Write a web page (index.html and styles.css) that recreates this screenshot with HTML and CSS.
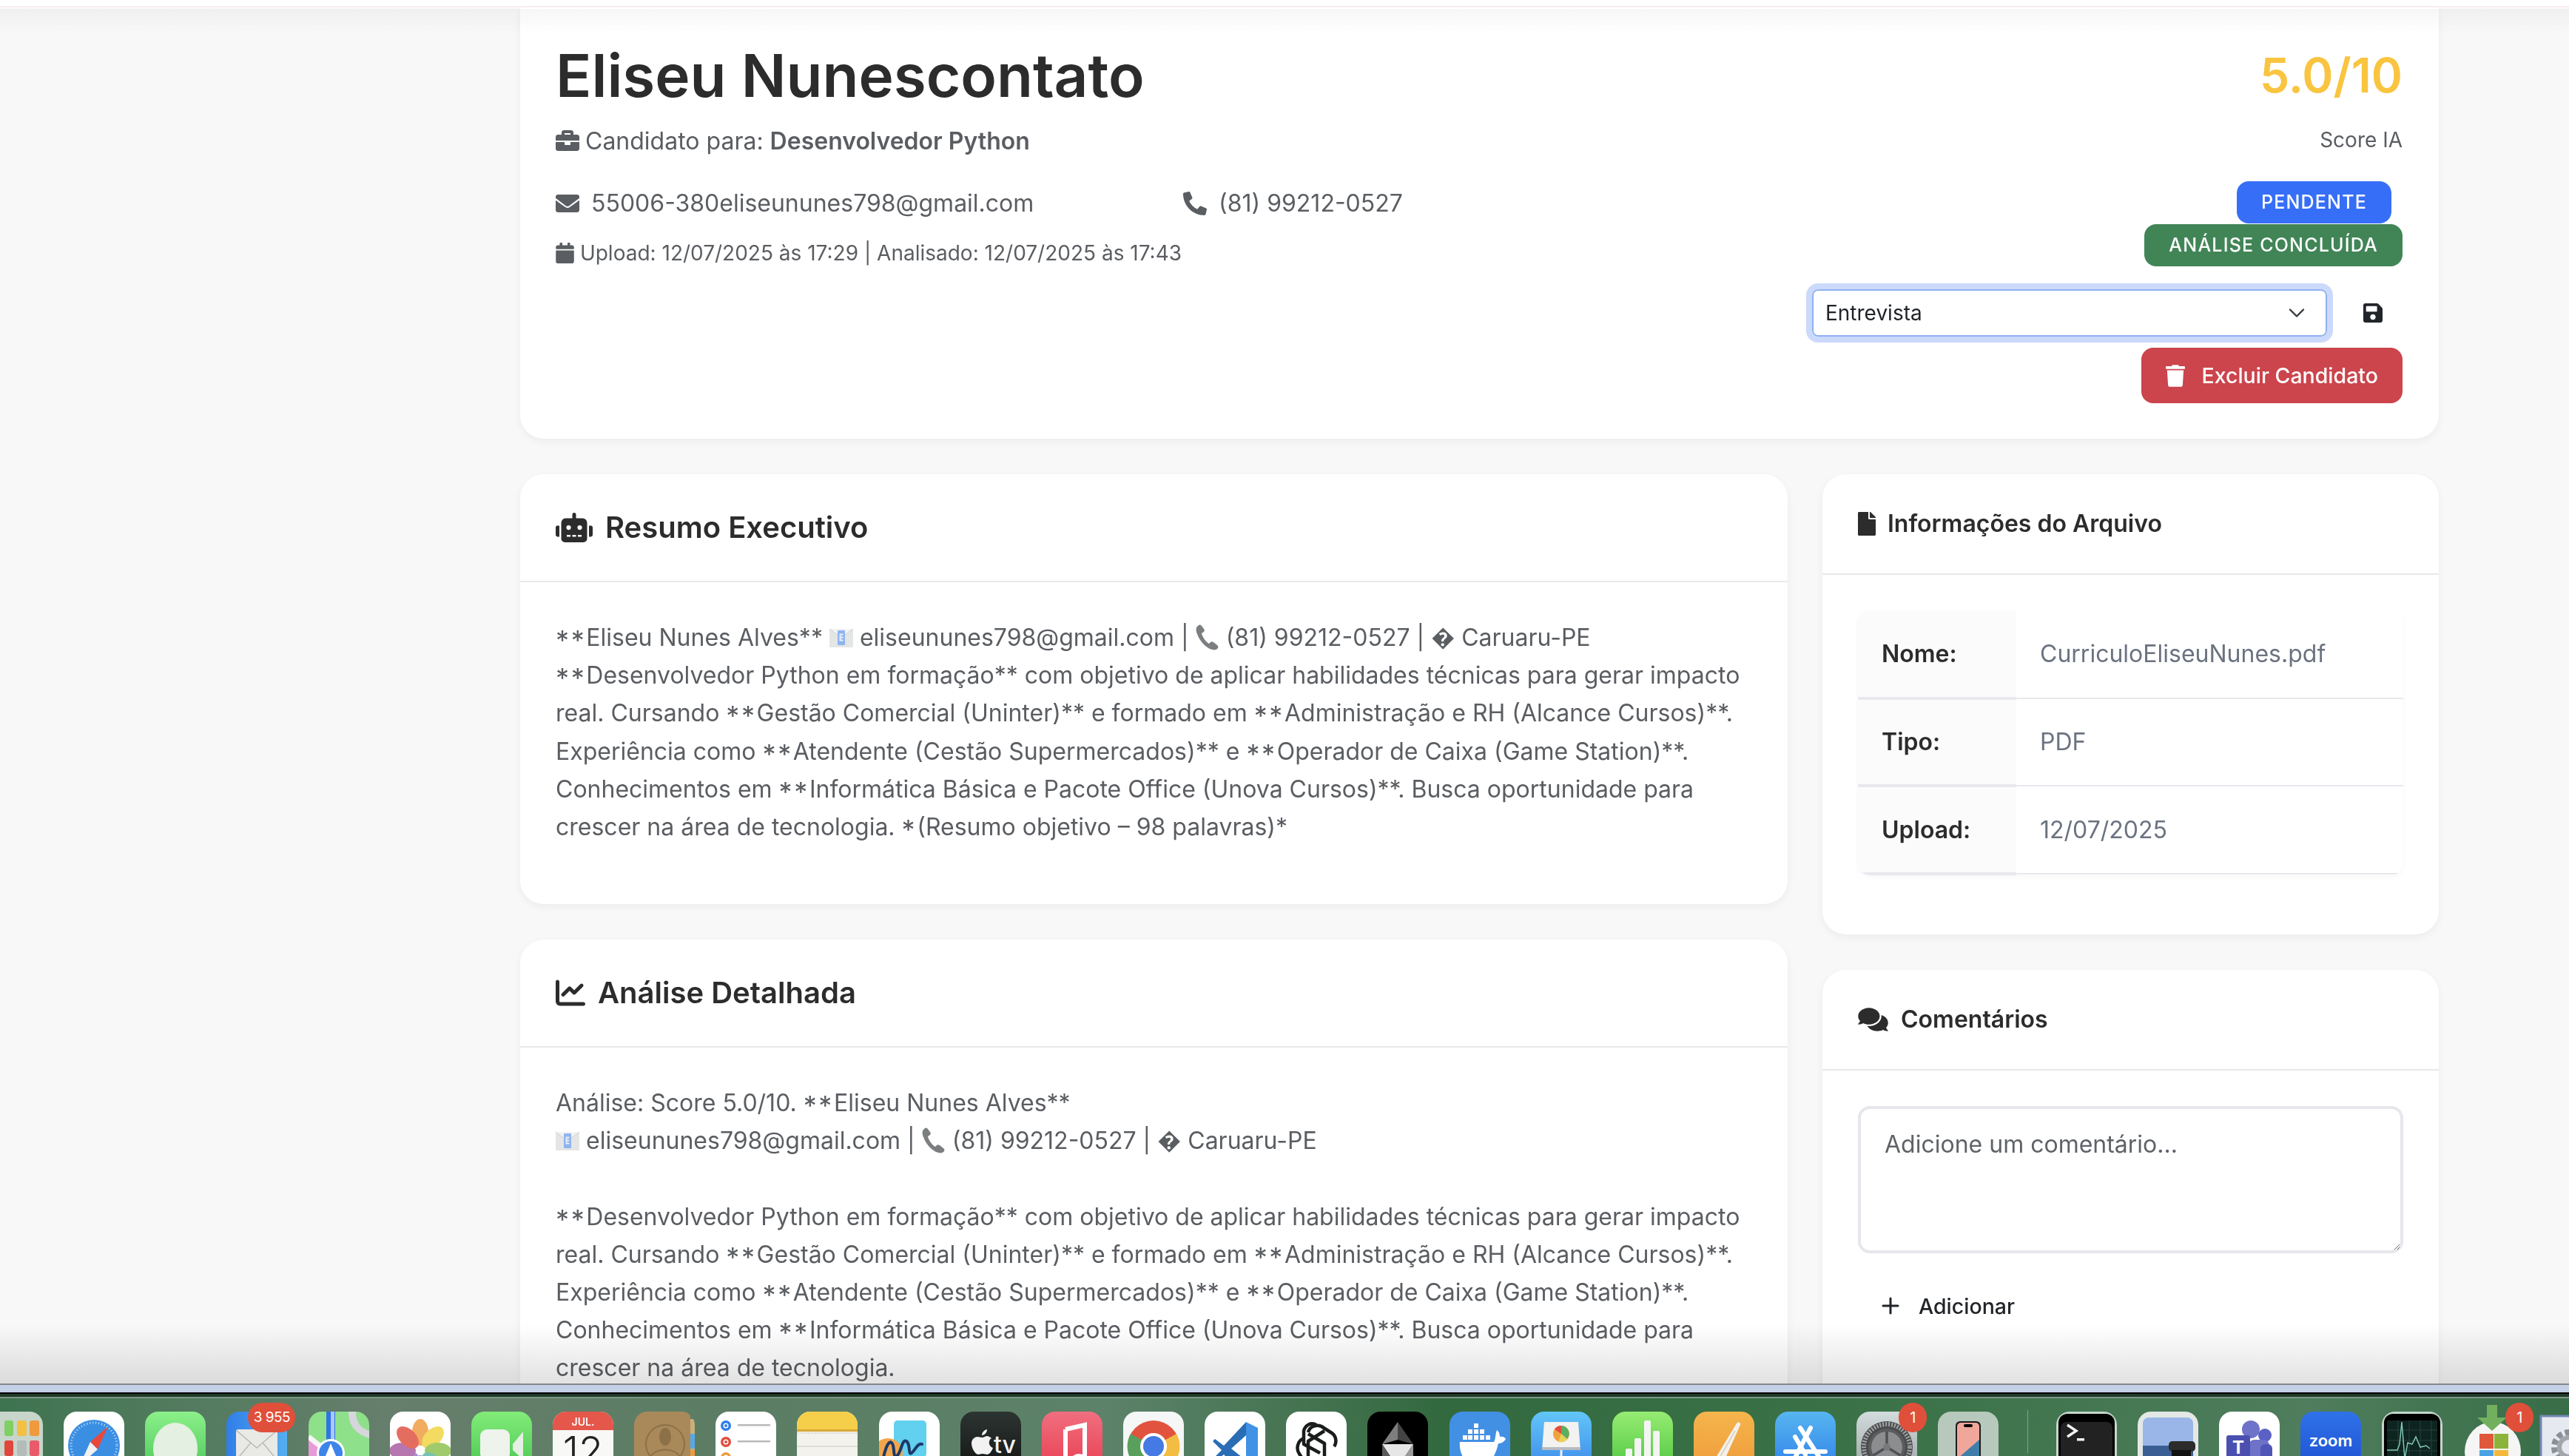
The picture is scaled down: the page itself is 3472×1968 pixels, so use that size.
FILE: index.html
```html
<!DOCTYPE html>
<html lang="pt-BR">
<head>
<meta charset="utf-8">
<title>Eliseu Nunescontato</title>
<link rel="stylesheet" href="styles.css">
</head>
<body>
<svg class="defs" width="0" height="0" aria-hidden="true">
  <symbol id="mail-emoji" viewBox="0 0 32 32"><rect x="0" y="4" width="32" height="25" fill="#e4e6e6"/><path d="M0 4l16 12L32 4" fill="#f2f3f3" stroke="#cfd2d2"/><rect x="11" y="6" width="10" height="20" rx="1" fill="#8fb4ee"/><path d="M13.5 10.5h5v2h-3v2h3v2h-3v2h3v2h-5z" fill="#e8eefb"/></symbol>
  <symbol id="phone-emoji" viewBox="0 0 32 36"><path d="M3 2c-3 2-3 6-1 11 3 8 9 16 17 20 5 2 9 2 11-1 1-2 0-3-1-4l-5-4c-2-1-3-1-4 0l-2 2c-4-2-9-9-10-14l3-2c1-1 1-3 0-4L8 2C6 0 5 0 3 2z" fill="#7c7f80"/></symbol>
</svg>

<div class="topbar"></div>

<main class="page">
  <section class="card hero">
    <div class="hero-left">
      <h1>Eliseu Nunescontato</h1>
      <p class="role"><svg class="ico ico-role" viewBox="0 0 512 512"><path d="M320 336c0 8.84-7.16 16-16 16h-96c-8.84 0-16-7.16-16-16v-48H0v144c0 25.6 22.4 48 48 48h416c25.6 0 48-22.4 48-48V288H320v48zm144-208h-80V80c0-25.6-22.4-48-48-48H176c-25.6 0-48 22.4-48 48v48H48c-25.6 0-48 22.4-48 48v80h512v-80c0-25.6-22.4-48-48-48zm-144 0H192V96h128v32z"/></svg> Candidato para: <strong>Desenvolvedor Python</strong></p>
      <div class="contacts">
        <span class="contact"><svg class="ico ico-contact" viewBox="0 0 512 512"><path d="M502.3 190.8c3.9-3.1 9.7-.2 9.7 4.7V400c0 26.5-21.5 48-48 48H48c-26.5 0-48-21.5-48-48V195.6c0-5 5.7-7.8 9.7-4.7 22.4 17.4 52.1 39.5 154.1 113.6 21.1 15.4 56.7 47.8 92.2 47.6 35.7.3 72-32.8 92.3-47.6 102-74.1 131.6-96.3 154-113.7zM256 320c23.2.4 56.6-29.2 73.4-41.4 132.7-96.3 142.8-104.7 173.4-128.7 5.8-4.5 9.2-11.5 9.2-18.9v-19c0-26.5-21.5-48-48-48H48C21.5 64 0 85.5 0 112v19c0 7.4 3.4 14.3 9.2 18.9 30.6 23.9 40.7 32.4 173.4 128.7 16.8 12.2 50.2 41.8 73.4 41.4z"/></svg>55006-380eliseununes798@gmail.com</span>
        <span class="contact"><svg class="ico ico-contact" viewBox="0 0 512 512"><path d="M497.39 361.8l-112-48a24 24 0 0 0-28 6.9l-49.6 60.6A370.66 370.66 0 0 1 130.6 204.11l60.6-49.6a23.94 23.94 0 0 0 6.9-28l-48-112A24.16 24.16 0 0 0 122.6.61l-104 24A24 24 0 0 0 0 48c0 256.5 207.9 464 464 464a24 24 0 0 0 23.4-18.6l24-104a24.29 24.29 0 0 0-14.01-27.6z"/></svg>(81) 99212-0527</span>
      </div>
      <p class="meta"><svg class="ico ico-meta" viewBox="0 0 448 512"><path d="M12 192h424c6.6 0 12 5.4 12 12v260c0 26.5-21.5 48-48 48H48c-26.5 0-48-21.5-48-48V204c0-6.6 5.4-12 12-12zm436-44v-36c0-26.5-21.5-48-48-48h-48V12c0-6.6-5.4-12-12-12h-40c-6.6 0-12 5.4-12 12v52H160V12c0-6.6-5.4-12-12-12h-40c-6.6 0-12 5.4-12 12v52H48C21.5 64 0 85.5 0 112v36c0 6.6 5.4 12 12 12h424c6.6 0 12-5.4 12-12z"/></svg> Upload: 12/07/2025 às 17:29 | Analisado: 12/07/2025 às 17:43</p>
    </div>
    <div class="hero-right">
      <div class="score">5.0/10</div>
      <div class="score-label">Score IA</div>
      <span class="badge badge-blue">PENDENTE</span>
      <span class="badge badge-green">ANÁLISE CONCLUÍDA</span>
      <div class="status-row">
        <div class="select-wrap">
          <select class="status-select"><option>Entrevista</option></select>
          <svg class="chevron" viewBox="0 0 16 16"><path d="M2 5l6 6 6-6" fill="none" stroke="#343a40" stroke-width="1.6" stroke-linecap="round" stroke-linejoin="round"/></svg>
        </div>
        <svg class="ico ico-save" viewBox="0 0 448 512"><path d="M433.941 129.941l-83.882-83.882A48 48 0 0 0 316.118 32H48C21.49 32 0 53.49 0 80v352c0 26.51 21.49 48 48 48h352c26.51 0 48-21.49 48-48V163.882a48 48 0 0 0-14.059-33.941zM224 416c-35.346 0-64-28.654-64-64 0-35.346 28.654-64 64-64s64 28.654 64 64c0 35.346-28.654 64-64 64zm96-304.52V212c0 6.627-5.373 12-12 12H76c-6.627 0-12-5.373-12-12V108c0-6.627 5.373-12 12-12h228.52c3.183 0 6.235 1.264 8.485 3.515l3.48 3.48A11.996 11.996 0 0 1 320 111.48z"/></svg>
      </div>
      <button class="btn-danger"><svg class="ico ico-trash" viewBox="0 0 448 512"><path d="M432 32H312l-9.4-18.7A24 24 0 0 0 281.1 0H166.8a23.72 23.72 0 0 0-21.4 13.3L136 32H16A16 16 0 0 0 0 48v32a16 16 0 0 0 16 16h416a16 16 0 0 0 16-16V48a16 16 0 0 0-16-16zM53.2 467a48 48 0 0 0 47.9 45h245.8a48 48 0 0 0 47.9-45L416 128H32z"/></svg>Excluir Candidato</button>
    </div>
  </section>

  <div class="columns">
    <div class="col">
      <section class="card">
        <header class="card-head head-lg"><svg class="ico ico-robot" viewBox="0 0 640 512"><path d="M32,224H64V416H32A31.96166,31.96166,0,0,1,0,384V256A31.96166,31.96166,0,0,1,32,224Zm512-48V448a64.06328,64.06328,0,0,1-64,64H160a64.06328,64.06328,0,0,1-64-64V176a79.974,79.974,0,0,1,80-80H288V32a32,32,0,0,1,64,0V96H464A79.974,79.974,0,0,1,544,176ZM264,256a40,40,0,1,0-40,40A39.997,39.997,0,0,0,264,256Zm-8,128H192v32h64Zm96,0H288v32h64ZM456,256a40,40,0,1,0-40,40A39.997,39.997,0,0,0,456,256Zm-8,128H384v32h64ZM640,256V384a31.96166,31.96166,0,0,1-32,32H576V224h32A31.96166,31.96166,0,0,1,640,256Z"/></svg><h2>Resumo Executivo</h2></header>
        <div class="card-body">
          <div class="prose">
            <span class="line"><span class="ast">**</span>Eliseu Nunes Alves** <svg class="emoji"><use href="#mail-emoji"/></svg> eliseununes798@gmail.com | <svg class="emoji emoji-phone"><use href="#phone-emoji"/></svg> (81) 99212-0527 | � Caruaru-PE</span>
            <span class="line"><span class="ast">**</span>Desenvolvedor Python em formação** com objetivo de aplicar habilidades técnicas para gerar impacto</span>
            <span class="line">real. Cursando <span class="ast">**</span>Gestão Comercial (Uninter)** e formado em <span class="ast">**</span>Administração e RH (Alcance Cursos)**.</span>
            <span class="line">Experiência como <span class="ast">**</span>Atendente (Cestão Supermercados)** e <span class="ast">**</span>Operador de Caixa (Game Station)**.</span>
            <span class="line">Conhecimentos em <span class="ast">**</span>Informática Básica e Pacote Office (Unova Cursos)**. Busca oportunidade para</span>
            <span class="line">crescer na área de tecnologia. <span class="ast">*</span>(Resumo objetivo – 98 palavras)*</span>
          </div>
        </div>
      </section>
      <section class="card">
        <header class="card-head head-lg"><svg class="ico ico-chart" viewBox="0 0 512 512"><path d="M64 64c0-17.7-14.3-32-32-32S0 46.3 0 64V400c0 44.2 35.8 80 80 80H480c17.7 0 32-14.3 32-32s-14.3-32-32-32H80c-8.8 0-16-7.2-16-16V64zm406.6 86.6c12.5-12.5 12.5-32.8 0-45.3s-32.8-12.5-45.3 0L320 210.7l-57.4-57.4c-12.5-12.5-32.8-12.5-45.3 0l-112 112c-12.5 12.5-12.5 32.8 0 45.3s32.8 12.5 45.3 0L240 221.3l57.4 57.4c12.5 12.5 32.8 12.5 45.3 0l128-128z"/></svg><h2>Análise Detalhada</h2></header>
        <div class="card-body">
          <div class="prose">
            <span class="line">Análise: Score 5.0/10. <span class="ast">**</span>Eliseu Nunes Alves**</span>
            <span class="line line-gap"><svg class="emoji"><use href="#mail-emoji"/></svg> eliseununes798@gmail.com | <svg class="emoji emoji-phone"><use href="#phone-emoji"/></svg> (81) 99212-0527 | � Caruaru-PE</span>
            <span class="line"><span class="ast">**</span>Desenvolvedor Python em formação** com objetivo de aplicar habilidades técnicas para gerar impacto</span>
            <span class="line">real. Cursando <span class="ast">**</span>Gestão Comercial (Uninter)** e formado em <span class="ast">**</span>Administração e RH (Alcance Cursos)**.</span>
            <span class="line">Experiência como <span class="ast">**</span>Atendente (Cestão Supermercados)** e <span class="ast">**</span>Operador de Caixa (Game Station)**.</span>
            <span class="line">Conhecimentos em <span class="ast">**</span>Informática Básica e Pacote Office (Unova Cursos)**. Busca oportunidade para</span>
            <span class="line">crescer na área de tecnologia.</span>
          </div>
        </div>
      </section>
    </div>
    <aside class="col">
      <section class="card">
        <header class="card-head head-sm"><svg class="ico ico-file" viewBox="0 0 384 512"><path d="M224 136V0H24C10.7 0 0 10.7 0 24v464c0 13.3 10.7 24 24 24h336c13.3 0 24-10.7 24-24V160H248c-13.2 0-24-10.8-24-24zm160-14.1v6.1H256V0h6.1c6.4 0 12.5 2.5 17 7l97.9 98c4.5 4.5 7 10.6 7 16.9z"/></svg><h3>Informações do Arquivo</h3></header>
        <div class="card-body">
          <table class="info">
            <tr><th>Nome:</th><td>CurriculoEliseuNunes.pdf</td></tr>
            <tr><th>Tipo:</th><td>PDF</td></tr>
            <tr><th>Upload:</th><td>12/07/2025</td></tr>
          </table>
        </div>
      </section>
      <section class="card">
        <header class="card-head head-sm"><svg class="ico ico-comments" viewBox="0 0 576 512"><path d="M416 192c0-88.4-93.1-160-208-160S0 103.6 0 192c0 34.3 14.1 65.9 38 92-13.4 30.2-35.5 54.2-35.8 54.5-2.2 2.3-2.8 5.7-1.5 8.7S4.8 352 8 352c36.6 0 66.9-12.3 88.7-25 32.2 15.7 70.3 25 111.3 25 114.9 0 208-71.6 208-160zm122 220c23.9-26 38-57.7 38-92 0-66.9-53.5-124.2-129.3-148.1.9 6.6 1.3 13.3 1.3 20.1 0 105.9-107.7 192-240 192-10.8 0-21.3-.8-31.7-1.9C207.8 439.6 281.8 480 368 480c41 0 79.1-9.2 111.3-25 21.8 12.7 52.1 25 88.7 25 3.2 0 6.1-1.9 7.3-4.8 1.3-2.9.7-6.3-1.5-8.7-.3-.3-22.4-24.2-35.8-54.5z"/></svg><h3>Comentários</h3></header>
        <div class="card-body card-body-tall">
          <textarea class="comment" placeholder="Adicione um comentário..."></textarea>
          <button class="btn-plain"><svg class="ico-plus" viewBox="0 0 24 24"><path d="M12 2v20M2 12h20" fill="none" stroke="#212529" stroke-width="3" stroke-linecap="round"/></svg>Adicionar</button>
        </div>
      </section>
    </aside>
  </div>
</main>

<div class="top-fade"></div>

<div class="dock-wrap">
  <div class="fade"></div>
  <div class="strip"></div>
  <div class="shelf"></div>
  <nav class="dock">
    <!-- Launchpad -->
    <div class="app"><svg viewBox="0 0 82 82"><rect width="82" height="82" fill="#c7d5ca"/><g><rect x="30" y="12" width="12" height="21" rx="3" fill="#7fcf62"/><rect x="47" y="12" width="13" height="21" rx="3" fill="#f4c042"/><rect x="64" y="12" width="13" height="21" rx="3" fill="#ef9a3c"/><rect x="30" y="39" width="12" height="21" rx="3" fill="#e0473c"/><rect x="47" y="39" width="13" height="21" rx="3" fill="#b4bcb9"/><rect x="64" y="39" width="13" height="21" rx="3" fill="#ea5a6a"/><rect x="30" y="66" width="12" height="16" rx="3" fill="#52c4b0"/><rect x="47" y="66" width="13" height="16" rx="3" fill="#59b8ef"/><rect x="64" y="66" width="13" height="16" rx="3" fill="#8a6ae0"/></g></svg></div>
    <!-- Safari -->
    <div class="app"><svg viewBox="0 0 82 82"><rect width="82" height="82" fill="#fff"/><circle cx="41" cy="46" r="35" fill="#3b8fe3"/><circle cx="41" cy="46" r="31" fill="none" stroke="#cfe3f7" stroke-width="3" stroke-dasharray="1 3"/><path d="M60 20L46 51 36 41z" fill="#e8483c"/><path d="M22 72l14-31 10 10z" fill="#f2f2f2"/></svg></div>
    <!-- Messages -->
    <div class="app"><svg viewBox="0 0 82 82"><defs><linearGradient id="gMsg" x1="0" y1="0" x2="0" y2="1"><stop offset="0" stop-color="#8cf08a"/><stop offset="1" stop-color="#4cc85a"/></linearGradient></defs><rect width="82" height="82" fill="url(#gMsg)"/><ellipse cx="41" cy="50" rx="30" ry="35" fill="#e4f0e2"/></svg></div>
    <!-- Mail -->
    <div class="app"><svg viewBox="0 0 82 82"><defs><linearGradient id="gMail" x1="0" y1="0" x2="1" y2="0"><stop offset="0" stop-color="#2f7ee8"/><stop offset="1" stop-color="#55aef0"/></linearGradient></defs><rect width="82" height="82" fill="url(#gMail)"/><rect x="13" y="24" width="56" height="42" rx="3" fill="#e9e9e6"/><path d="M13 25l28 24 28-24M13 66l20-24M69 66L49 42" fill="none" stroke="#b9b9b5" stroke-width="1.5"/></svg><span class="badge-dock badge-wide">3 955</span></div>
    <!-- Maps -->
    <div class="app"><svg viewBox="0 0 82 82"><rect width="82" height="82" fill="#8fe08a"/><path d="M0 34L32 64v18H0z" fill="#e79ad8"/><path d="M50 82L82 62v20z" fill="#9fe0a0"/><rect x="24" y="0" width="12" height="44" fill="#2f74e6"/><rect x="30" y="0" width="5" height="44" fill="#fff" opacity=".6"/><path d="M54 0c0 20 10 30 28 36v-10C70 22 64 14 64 0z" fill="#d6d6dc"/><path d="M0 34L70 90" stroke="#f5f5f5" stroke-width="7" fill="none"/><circle cx="30" cy="56" r="19" fill="#fff"/><circle cx="30" cy="56" r="16" fill="#3d84ea"/><path d="M30 43L40 67l-10-5-10 5z" fill="#fff"/></svg></div>
    <!-- Photos -->
    <div class="app"><svg viewBox="0 0 82 82"><rect width="82" height="82" fill="#fff"/><g opacity=".82"><ellipse cx="41" cy="28" rx="11" ry="18" fill="#ef9a3c"/><ellipse cx="58" cy="35" rx="11" ry="18" fill="#f0d33e" transform="rotate(45 58 35)"/><ellipse cx="65" cy="53" rx="11" ry="18" fill="#8cc04c" transform="rotate(90 65 53)"/><ellipse cx="58" cy="70" rx="11" ry="18" fill="#5ab5a2" transform="rotate(135 58 70)"/><ellipse cx="41" cy="77" rx="11" ry="18" fill="#6f8fd8"/><ellipse cx="24" cy="70" rx="11" ry="18" fill="#9b74c8" transform="rotate(45 24 70)"/><ellipse cx="17" cy="53" rx="11" ry="18" fill="#a65aa0" transform="rotate(90 17 53)"/><ellipse cx="24" cy="35" rx="11" ry="18" fill="#e04d3e" transform="rotate(135 24 35)"/></g></svg></div>
    <!-- FaceTime -->
    <div class="app"><svg viewBox="0 0 82 82"><defs><linearGradient id="gFt" x1="0" y1="0" x2="0" y2="1"><stop offset="0" stop-color="#82ec78"/><stop offset="1" stop-color="#48c552"/></linearGradient></defs><rect width="82" height="82" fill="url(#gFt)"/><rect x="12" y="24" width="40" height="42" rx="9" fill="#eef3ec"/><path d="M56 44l14-17v38L56 52z" fill="#e6efe3"/></svg></div>
    <!-- Calendar -->
    <div class="app"><svg viewBox="0 0 82 82"><rect width="82" height="82" fill="#f8f8f6"/><rect width="82" height="25" fill="#e4574a"/><text x="41" y="19" class="cal-month">JUL.</text><text x="41" y="72" class="cal-day">12</text></svg></div>
    <!-- Contacts -->
    <div class="app"><svg viewBox="0 0 82 82"><rect x="72" y="10" width="10" height="72" rx="3" fill="#c9b07a"/><rect x="74" y="30" width="8" height="20" fill="#58a8e6"/><rect x="74" y="52" width="8" height="20" fill="#ef9a3c"/><rect width="76" height="82" rx="8" fill="#a9895a"/><circle cx="42" cy="44" r="26" fill="none" stroke="#8c7047" stroke-width="2"/><ellipse cx="42" cy="34" rx="8" ry="12" fill="#8c7047"/><path d="M22 62c5-14 35-14 40 0" fill="none" stroke="#8c7047" stroke-width="2"/></svg></div>
    <!-- Reminders -->
    <div class="app"><svg viewBox="0 0 82 82"><rect width="82" height="82" fill="#fff"/><circle cx="14" cy="19" r="7" fill="#2f7ee8"/><circle cx="14" cy="19" r="3.5" fill="#fff"/><circle cx="14" cy="19" r="2" fill="#2f7ee8"/><rect x="30" y="17" width="44" height="2.5" fill="#b8babb"/><circle cx="14" cy="41" r="7" fill="#e04d3e"/><circle cx="14" cy="41" r="3.5" fill="#fff"/><circle cx="14" cy="41" r="2" fill="#e04d3e"/><rect x="30" y="39" width="44" height="2.5" fill="#b8babb"/><circle cx="14" cy="62" r="7" fill="#ef9a3c"/><circle cx="14" cy="62" r="3.5" fill="#fff"/></svg></div>
    <!-- Notes -->
    <div class="app"><svg viewBox="0 0 82 82"><rect width="82" height="82" fill="#f3f2ec"/><rect width="82" height="24" fill="#f6cf4a"/><rect y="24" width="82" height="3" fill="#d9a838"/><path d="M0 29h82" stroke="#c5c5bd" stroke-width="1.5" stroke-dasharray="1 1.5"/><rect y="46" width="82" height="2" fill="#dedcd4"/></svg></div>
    <!-- Freeform -->
    <div class="app"><svg viewBox="0 0 82 82"><rect width="82" height="82" fill="#fff"/><rect x="20" y="12" width="44" height="50" rx="5" fill="#62d0ef"/><circle cx="12" cy="56" r="20" fill="#f2a64c"/><path d="M4 72c3-18 8-34 13-30s1 22 7 18 7-24 13-20 2 20 7 16 8-14 14-12" fill="none" stroke="#1c3a68" stroke-width="4" stroke-linecap="round"/></svg></div>
    <!-- TV -->
    <div class="app"><svg viewBox="0 0 82 82"><defs><linearGradient id="gTv" x1="0" y1="0" x2="0" y2="1"><stop offset="0" stop-color="#2c3431"/><stop offset="1" stop-color="#121614"/></linearGradient></defs><rect width="82" height="82" fill="url(#gTv)"/><path d="M29 35c3 0 5-2 7-2 1 0 4 1 6 3-5 3-4 11 2 13-2 5-5 9-8 9-2 0-3-1-6-1s-4 1-6 1c-4 0-9-9-9-15 0-6 5-9 8-9 2 0 4 1 6 1zM29 32c0-4 3-7 7-8 0 4-3 8-7 8z" fill="#f2f2f2"/><text x="60" y="56" class="tv-text">tv</text></svg></div>
    <!-- Music -->
    <div class="app"><svg viewBox="0 0 82 82"><defs><linearGradient id="gMu" x1="0" y1="0" x2="0" y2="1"><stop offset="0" stop-color="#f06f80"/><stop offset="1" stop-color="#e83e50"/></linearGradient></defs><rect width="82" height="82" fill="url(#gMu)"/><path d="M32 24l26-6v48" fill="none" stroke="#fff" stroke-width="6"/><path d="M32 24v48" stroke="#fff" stroke-width="6"/><ellipse cx="24" cy="72" rx="11" ry="9" fill="#fff"/><ellipse cx="50" cy="66" rx="11" ry="9" fill="#fff"/></svg></div>
    <!-- Chrome -->
    <div class="app"><svg viewBox="0 0 82 82"><rect width="82" height="82" fill="#f5f6f6"/><circle cx="41" cy="47" r="35" fill="#e2533f"/><path d="M72 30A35 35 0 0 1 41 82L41 47z" fill="#f2bd42"/><path d="M41 47L41 82A35 35 0 0 1 10 30z" fill="#58a05c"/><circle cx="41" cy="47" r="18" fill="#fff"/><circle cx="41" cy="47" r="14" fill="#4579e4"/></svg></div>
    <!-- VS Code -->
    <div class="app"><svg viewBox="0 0 82 82"><rect width="82" height="82" fill="#fff"/><path d="M56 14L72 22v60H56z" fill="#3f92e6"/><path d="M56 14L26 46 14 37l-3 3 12 12-12 12 3 3 12-9 24 26h6V66L36 50 56 32z" fill="#2a6db5"/></svg></div>
    <!-- ChatGPT -->
    <div class="app"><svg viewBox="0 0 82 82"><rect width="82" height="82" fill="#fff"/><g fill="none" stroke="#1a1c1c" stroke-width="4.5" stroke-linejoin="round"><path d="M30 28c2-9 14-12 21-6l11 7c6 4 7 13 3 18"/><path d="M24 36c-8 3-11 14-6 21l7 11c4 6 13 7 18 3"/><path d="M52 26L30 40v24l18 11c7 3 15-1 17-8"/><path d="M30 30l22 13v22"/><path d="M41 18c-7-4-15 0-17 8v18l22 12"/></g></svg></div>
    <!-- Black prism app -->
    <div class="app"><svg viewBox="0 0 82 82"><rect width="82" height="82" fill="#000"/><path d="M41 14L20 44l21-6z" fill="#7e7e7e"/><path d="M41 14l21 30-21-6z" fill="#444"/><path d="M20 44h42L50 62H32z" fill="#fafafa" opacity=".92"/><path d="M62 44L50 62l12 14z" fill="#9a9a9a"/><path d="M20 44l12 18-12 14z" fill="#5a5a5a"/><path d="M32 62h18l12 14H20z" fill="#777"/></svg></div>
    <!-- Docker -->
    <div class="app"><svg viewBox="0 0 82 82"><rect width="82" height="82" fill="#4290e4"/><g fill="#fff"><rect x="33" y="16" width="6" height="6"/><rect x="25" y="24" width="6" height="6"/><rect x="33" y="24" width="6" height="6"/><rect x="41" y="24" width="6" height="6"/><rect x="18" y="32" width="6" height="6"/><rect x="25" y="32" width="6" height="6"/><rect x="33" y="32" width="6" height="6"/><rect x="41" y="32" width="6" height="6"/><rect x="49" y="32" width="6" height="6"/><path d="M14 41h46c2-2 2-11 4-16 3 2 4 6 4 9 4-1 7 1 8 3-3 5-7 6-10 6-4 18-14 34-26 34S12 61 14 41z"/></g></svg></div>
    <!-- Keynote -->
    <div class="app"><svg viewBox="0 0 82 82"><defs><linearGradient id="gKn" x1="0" y1="0" x2="0" y2="1"><stop offset="0" stop-color="#62c6f8"/><stop offset="1" stop-color="#3b86ea"/></linearGradient></defs><rect width="82" height="82" fill="url(#gKn)"/><path d="M18 14h46l3 38H15z" fill="#f2f2f0"/><rect x="15" y="48" width="52" height="4" fill="#b8bcc2"/><circle cx="41" cy="30" r="11" fill="#f2a23c"/><path d="M41 30V19a11 11 0 0 1 8 18z" fill="#58b060"/><path d="M41 30l8 7a11 11 0 0 1-12 4z" fill="#e9d25a"/><path d="M41 30V19a11 11 0 0 0-9 5z" fill="#e04d3e"/><rect x="39.5" y="52" width="3" height="30" fill="#eef"/></svg></div>
    <!-- Numbers -->
    <div class="app"><svg viewBox="0 0 82 82"><defs><linearGradient id="gNu" x1="0" y1="0" x2="0" y2="1"><stop offset="0" stop-color="#96ec72"/><stop offset="1" stop-color="#4dc53f"/></linearGradient></defs><rect width="82" height="82" fill="url(#gNu)"/><rect x="18" y="50" width="9" height="32" rx="2" fill="#f4f4f4"/><rect x="30" y="36" width="9" height="46" rx="2" fill="#f4f4f4"/><rect x="43" y="12" width="9" height="70" rx="2" fill="#f4f4f4"/><rect x="55" y="26" width="9" height="56" rx="2" fill="#f4f4f4"/></svg></div>
    <!-- Pages -->
    <div class="app"><svg viewBox="0 0 82 82"><defs><linearGradient id="gPa" x1="0" y1="0" x2="0" y2="1"><stop offset="0" stop-color="#f5b54c"/><stop offset="1" stop-color="#ee9a3a"/></linearGradient></defs><rect width="82" height="82" fill="url(#gPa)"/><path d="M58 16c3-3 6-1 5 2L36 78l-18 4z" fill="#f5f1ea"/><path d="M56 26L26 78" stroke="#dcd4c6" stroke-width="2"/></svg></div>
    <!-- App Store -->
    <div class="app"><svg viewBox="0 0 82 82"><defs><linearGradient id="gAs" x1="0" y1="0" x2="0" y2="1"><stop offset="0" stop-color="#57b5f0"/><stop offset="1" stop-color="#2f80e8"/></linearGradient></defs><rect width="82" height="82" fill="url(#gAs)"/><g stroke="#fff" stroke-width="6" stroke-linecap="round" fill="none"><path d="M27 34L41 58"/><path d="M48 22L27 62"/><path d="M34 22l26 40"/><path d="M14 54h54"/></g></svg></div>
    <!-- Settings -->
    <div class="app"><svg viewBox="0 0 82 82"><defs><linearGradient id="gSe" x1="0" y1="0" x2="0" y2="1"><stop offset="0" stop-color="#d3dcdc"/><stop offset="1" stop-color="#9ca3a3"/></linearGradient></defs><rect width="82" height="82" fill="url(#gSe)"/><circle cx="41" cy="48" r="35" fill="#4a4c4e"/><circle cx="41" cy="48" r="31" fill="none" stroke="#a2a4a6" stroke-width="6" stroke-dasharray="2 2"/><circle cx="41" cy="48" r="25" fill="#5a5c5e"/><circle cx="41" cy="48" r="21" fill="#8b8d8f"/><g stroke="#4f5154" stroke-width="3.5"><path d="M41 48V27M41 48L23 59M41 48L59 59"/></g><circle cx="41" cy="48" r="5" fill="#77797b"/></svg><span class="badge-dock badge-round">1</span></div>
    <!-- iPhone mirroring -->
    <div class="app"><svg viewBox="0 0 82 82"><rect width="82" height="82" fill="#b7c8bc"/><rect x="24" y="13" width="34" height="72" rx="6" fill="#1c1c1e"/><rect x="26" y="15" width="30" height="68" rx="5" fill="#f0a69a"/><path d="M26 64l30-26v45H26z" fill="#3f7ea8"/><rect x="35" y="17" width="12" height="4" rx="2" fill="#000"/></svg></div>
    <div class="dock-sep"></div>
    <!-- Terminal -->
    <div class="app"><svg viewBox="0 0 82 82"><rect width="82" height="82" fill="#c5d6cc"/><rect x="3" y="3" width="76" height="80" rx="12" fill="#000"/><rect x="6" y="14" width="70" height="68" rx="8" fill="#222"/><path d="M15 18l12 8-12 8" fill="none" stroke="#f2f2f2" stroke-width="3.5"/><rect x="28" y="36" width="10" height="3.5" fill="#f2f2f2"/></svg></div>
    <!-- Preview -->
    <div class="app"><svg viewBox="0 0 82 82"><rect width="82" height="82" fill="#e3e8e6"/><rect x="7" y="8" width="68" height="74" rx="8" fill="#9ab6e8"/><path d="M7 46h68v36H7z" fill="#3a5e94"/><rect x="42" y="40" width="36" height="14" rx="5" fill="#2c2c2c"/><rect x="46" y="52" width="26" height="30" fill="#111"/></svg></div>
    <!-- Teams -->
    <div class="app"><svg viewBox="0 0 82 82"><rect width="82" height="82" fill="#fff"/><circle cx="43" cy="24" r="12" fill="#6e72c8"/><circle cx="62" cy="32" r="9" fill="#5a60c4"/><rect x="40" y="38" width="28" height="44" rx="8" fill="#6e72c8"/><rect x="56" y="44" width="16" height="38" rx="6" fill="#5056b8"/><rect x="10" y="32" width="32" height="32" rx="3" fill="#4b50b0"/><text x="26" y="57" class="teams-t">T</text></svg></div>
    <!-- Zoom -->
    <div class="app"><svg viewBox="0 0 82 82"><defs><linearGradient id="gZo" x1="0" y1="0" x2="0" y2="1"><stop offset="0" stop-color="#2f72e8"/><stop offset="1" stop-color="#1d4fd0"/></linearGradient></defs><rect width="82" height="82" fill="url(#gZo)"/><text x="41" y="47" class="zoom-text">zoom</text></svg></div>
    <!-- Activity Monitor -->
    <div class="app"><svg viewBox="0 0 82 82"><rect width="82" height="82" fill="#c4d6cc"/><rect x="3" y="3" width="76" height="80" rx="12" fill="#000"/><rect x="7" y="12" width="68" height="70" fill="#0e2420"/><path d="M7 25h68M7 39h68M7 53h68M22 12v70M37 12v70M52 12v70M67 12v70" stroke="#27423b" stroke-width="1"/><path d="M7 52h14l3-8 3-30 4 50 4-22 6 2 5-10 6 14 8-2 5 4" fill="none" stroke="#7fc8b0" stroke-width="1.5"/></svg></div>
    <!-- Downloads / Microsoft -->
    <div class="app app-plain"><svg viewBox="0 0 82 82"><ellipse cx="40" cy="54" rx="38" ry="40" fill="#f5f5f5"/><path d="M32 -9h14v17h13L39 26 19 8h13z" fill="#73b05e"/><rect x="22" y="30" width="19" height="20" fill="#e0583a"/><rect x="42" y="30" width="19" height="20" fill="#8cb43a"/><rect x="22" y="52" width="19" height="20" fill="#4ca3e4"/><rect x="42" y="52" width="19" height="20" fill="#f4b93c"/></svg><span class="badge-dock badge-round">1</span></div>
    <!-- Trailing doc with gear -->
    <div class="app app-plain app-last"><svg viewBox="0 0 82 82"><rect x="0" y="6" width="60" height="76" fill="#e6e9f0" stroke="#7488b4" stroke-width="3"/><circle cx="38" cy="48" r="20" fill="none" stroke="#8b9096" stroke-width="8" stroke-dasharray="7 4"/><circle cx="38" cy="48" r="13" fill="none" stroke="#a2a6ab" stroke-width="6"/></svg></div>
  </nav>
</div>
</body>
</html>
```

FILE: styles.css
```css
* { box-sizing: border-box; }
html, body { margin: 0; height: 1968px; overflow: hidden; }
body {
  position: relative;
  background: #f8f8f8;
  font-family: Inter, "Noto Sans", "Liberation Sans", sans-serif;
  font-size: 32px;
  line-height: 1.6;
  color: #5a5d61;
}
.defs { position: absolute; }

.topbar { height: 10px; background: #fff; border-bottom: 2px solid #fbeeee; }
.page { width: 2593px; margin-left: 703px; }

.card {
  background: #fff;
  border-radius: 32px;
  box-shadow: 0 4px 12px rgba(0, 0, 0, .05);
  margin-bottom: 48px;
  overflow: hidden;
}
.ico { fill: currentColor; flex: none; }

/* Hero */
.hero {
  height: 583px;
  padding: 44px 49px 0 48px;
  display: flex;
  justify-content: space-between;
  border-radius: 0 0 32px 32px;
}
h1 { margin: 0; font-size: 80px; line-height: 96px; font-weight: 600; color: #2c2c2c; }
.role { margin: 15px 0 0; line-height: 51px; }
.role strong { font-weight: 600; }
.ico-role { width: 32px; height: 32px; vertical-align: -4px; margin-right: -1px; }
.contacts { display: flex; margin-top: 33px; line-height: 51px; }
.contact { display: flex; align-items: center; width: 848px; }
.ico-contact { width: 32px; height: 32px; margin-right: 16px; }
.meta { margin: 20px 0 0; font-size: 28px; line-height: 45px; }
.ico-meta { width: 25px; height: 28px; vertical-align: -4px; }

.hero-right { display: flex; flex-direction: column; align-items: flex-end; margin-top: -2px; }
.score { font-size: 64px; line-height: 77px; font-weight: 600; color: #f9c440; position: relative; top: 11px; }
.score-label { margin-top: 38px; font-size: 28px; line-height: 45px; }
.badge {
  display: block;
  height: 57px;
  padding: 0 33px;
  border-radius: 16px;
  color: #fff;
  font-size: 25px;
  font-weight: 500;
  letter-spacing: 1.2px;
  line-height: 57px;
}
.badge-blue { margin: 33px 15px 0 0; background: #366ef7; }
.badge-green { margin-top: 1px; background: #418557; }

.status-row { display: flex; align-items: center; margin-top: 31px; width: 798px; }
.select-wrap { position: relative; width: 696px; height: 64px; }
.status-select {
  appearance: none;
  width: 100%;
  height: 100%;
  padding: 0 16px;
  border: 2px solid #8fb1f0;
  border-radius: 8px;
  outline: 8px solid #cbd9fb;
  background: #fff;
  font: 28px Inter, sans-serif;
  color: #212529;
}
.chevron { position: absolute; right: 29px; top: 20px; width: 24px; height: 24px; }
.ico-save { width: 26px; height: 30px; margin-left: 49px; color: #212529; }
.btn-danger {
  display: flex;
  align-items: center;
  margin-top: 15px;
  height: 75px;
  padding: 0 33px;
  border: 0;
  border-radius: 16px;
  background: #cc444c;
  color: #fff;
  font: 500 28.5px Inter, sans-serif;
}
.ico-trash { width: 26px; height: 30px; margin-right: 23px; }

/* Columns */
.columns { display: grid; grid-template-columns: 1713px 833px; column-gap: 47px; }
.card-head { display: flex; align-items: center; border-bottom: 2px solid #e8e8ec; color: #2c2c2c; }
.head-lg { height: 146px; padding: 0 48px; }
.head-sm { height: 136px; padding: 0 48px; }
h2 { margin: 0; font-size: 40px; line-height: 48px; font-weight: 600; }
h3 { margin: 0; font-size: 32px; line-height: 38px; font-weight: 600; }
.ico-robot { width: 50px; height: 40px; margin-right: 17px; }
.ico-chart { width: 40px; height: 40px; margin-right: 17px; }
.ico-file { width: 24px; height: 32px; margin-right: 16px; }
.ico-comments { width: 41px; height: 36px; margin-right: 17px; }
.card-body { padding: 48px; }
.card-body-tall { padding-bottom: 120px; }
.prose { margin: 1px 0 31px; }
.line { display: block; height: 51.2px; white-space: nowrap; }
.line-gap { margin-bottom: 51.2px; }
.ast { font-size: 36px; line-height: 1; letter-spacing: 2.6px; vertical-align: -5px; }
.emoji { width: 32px; height: 32px; vertical-align: -5px; }
.emoji-phone { width: 32px; height: 36px; vertical-align: -7px; }

.info {
  width: 100%;
  margin-bottom: 32px;
  border-collapse: collapse;
  border-radius: 16px;
  overflow: hidden;
  box-shadow: 0 2px 6px rgba(0, 0, 0, .04);
}
.info th, .info td { height: 118.7px; padding: 0 32px; text-align: left; font-size: 32px; }
.info th {
  width: 214px;
  background: #fcfbfc;
  color: #2c2c2c;
  font-weight: 600;
  border-bottom: 4px solid #e8e8ee;
}
.info td { color: #6b7280; border-bottom: 2px solid #e8e8ee; }

.comment {
  display: block;
  width: 100%;
  height: 199px;
  padding: 24px 32px;
  border: 4px solid #e5e7eb;
  border-radius: 16px;
  background: #fff;
  font: 32px/1.5 Inter, sans-serif;
  color: #212529;
}
.comment::placeholder { color: #5f6368; opacity: 1; }
.btn-plain {
  display: flex;
  align-items: center;
  margin-top: 33px;
  height: 76px;
  padding: 0 32px;
  border: 0;
  background: none;
  color: #212529;
  font: 500 28.5px Inter, sans-serif;
}
.ico-plus { width: 24px; height: 24px; margin-right: 26px; }

/* Screenshot overlays */
.top-fade {
  position: absolute;
  left: 0; right: 0; top: 12px;
  height: 34px;
  background: linear-gradient(rgba(240, 240, 240, .55), rgba(240, 240, 240, 0));
  mix-blend-mode: multiply;
}
.dock-wrap { position: absolute; left: 0; right: 0; bottom: 0; height: 178px; overflow: hidden; }
.fade {
  height: 80px;
  background: linear-gradient(#fff, #e2e2e2);
  mix-blend-mode: multiply;
}
.strip { height: 12px; border-top: 2px solid #85888c; background: rgba(190, 204, 228, .93); }
.shelf {
  height: 86px;
  border-top: 2px solid #000;
  background:
    linear-gradient(#1f3a29 0, #1f3a29 4px, #7e9886 4px, #7e9886 6px, transparent 6px),
    linear-gradient(90deg, #3e7350 0, #4f7a5c 200px, #667e6c 520px, #5b7d63 1000px, #5c8269 1500px, #33693f 1950px, #3c7349 2600px, #4f7d5d 3120px, #386d47 3472px);
}
.dock {
  position: absolute;
  left: -24px;
  top: 118px;
  display: flex;
  gap: 28.15px;
  width: 3600px;
  font-family: Inter, sans-serif;
}
.app { position: relative; flex: none; width: 82px; height: 82px; }
.app svg { display: block; width: 82px; height: 82px; border-radius: 18px; }
.app-plain svg { overflow: visible; }
.app-last { margin-left: -6px; }
.dock-sep { flex: none; width: 1px; height: 58px; margin: -2px 10px 0 10px; background: #7ea58d; }
.badge-dock {
  position: absolute;
  top: -12px;
  height: 40px;
  border-radius: 20px;
  background: #e04f3a;
  color: #fff;
  font-size: 20px;
  line-height: 40px;
  text-align: center;
}
.badge-wide { left: 29px; width: 64px; font-size: 19px; letter-spacing: -.5px; }
.badge-round { left: 57px; width: 38px; }
.cal-month { font: 600 14px Inter, sans-serif; fill: #fff; text-anchor: middle; }
.cal-day { font: 300 54px Inter, sans-serif; fill: #222; text-anchor: middle; }
.tv-text { font: 500 32px Inter, sans-serif; fill: #f2f2f2; text-anchor: middle; }
.teams-t { font: 700 24px Inter, sans-serif; fill: #fff; text-anchor: middle; }
.zoom-text { font: 600 22px Inter, sans-serif; fill: #fff; text-anchor: middle; }
```
